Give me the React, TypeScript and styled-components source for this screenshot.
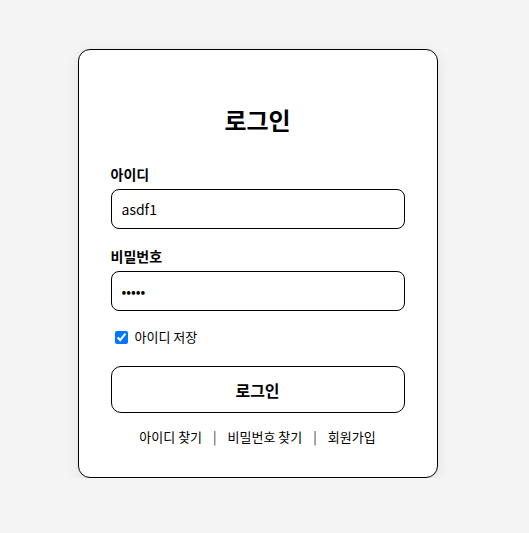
import React, { useState } from 'react'
import styled, { createGlobalStyle } from 'styled-components'

const GlobalStyle = createGlobalStyle`
  * {
    box-sizing: border-box;
  }
  body {
    margin: 0;
    background: #f4f4f4;
    font-family: 'Noto Sans CJK KR', 'Noto Sans', sans-serif;
    color: #000;
  }
`

const App = () => {
  const [userId, setUserId] = useState('asdf1')
  const [password, setPassword] = useState('asdfg')
  const [remember, setRemember] = useState(true)

  return (
    <Page>
      <GlobalStyle />
      <Card>
        <Title>로그인</Title>
        <Field>
          <Label htmlFor='userId'>아이디</Label>
          <Input
            id='userId'
            type='text'
            value={userId}
            onChange={e => setUserId(e.target.value)}
          />
        </Field>
        <Field>
          <Label htmlFor='password'>비밀번호</Label>
          <Input
            id='password'
            type='password'
            value={password}
            onChange={e => setPassword(e.target.value)}
          />
        </Field>
        <Remember>
          <input
            type='checkbox'
            checked={remember}
            onChange={e => setRemember(e.target.checked)}
          />
          아이디 저장
        </Remember>
        <SubmitButton type='button'>로그인</SubmitButton>
        <Links>
          <a href='#'>아이디 찾기</a>
          <Divider>|</Divider>
          <a href='#'>비밀번호 찾기</a>
          <Divider>|</Divider>
          <a href='#'>회원가입</a>
        </Links>
      </Card>
    </Page>
  )
}

const Page = styled.main`
  display: flex;
  justify-content: center;
  padding: 49px 14px 0 0;
`

const Card = styled.section`
  width: 360px;
  padding: 54px 32px 30px;
  background: #fff;
  border: 1px solid #000;
  border-radius: 12px;
  box-shadow: 0 4px 14px rgba(0, 0, 0, 0.08);
  display: flex;
  flex-direction: column;
`

const Title = styled.h2`
  margin: 0 0 29px;
  font-size: 24px;
  line-height: 32px;
  font-weight: 700;
  text-align: center;
`

const Field = styled.div`
  display: flex;
  flex-direction: column;
  margin-bottom: 18px;
  &:nth-of-type(2) {
    margin-bottom: 16px;
  }
`

const Label = styled.label`
  font-size: 14px;
  line-height: 18px;
  font-weight: 700;
  margin-bottom: 6px;
`

const Input = styled.input`
  height: 40px;
  padding: 0 10px;
  border: 1px solid #000;
  border-radius: 8px;
  font-family: inherit;
  font-size: 14px;
  color: #000;
  outline: none;
`

const Remember = styled.label`
  display: flex;
  align-items: center;
  font-size: 13px;
  line-height: 20px;
  margin-bottom: 19px;
  input {
    margin: 0 7px 0 4px;
    width: 13px;
    height: 13px;
  }
`

const SubmitButton = styled.button`
  height: 47px;
  background: #fff;
  border: 1px solid #000;
  border-radius: 10px;
  font-family: inherit;
  font-size: 16px;
  font-weight: 700;
  color: #000;
  cursor: pointer;
  margin-bottom: 14px;
`

const Links = styled.nav`
  display: flex;
  justify-content: center;
  font-size: 13px;
  line-height: 20px;
  a {
    color: #000;
    text-decoration: none;
  }
`

const Divider = styled.span`
  margin: 0 11px;
  color: #333;
`

export default App
